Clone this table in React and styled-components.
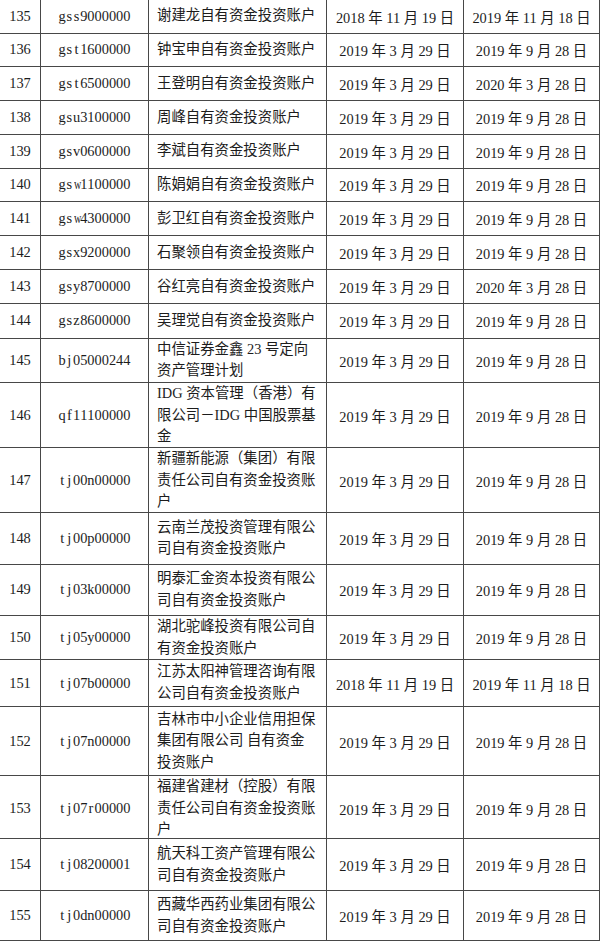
import React from 'react';
import styled, { createGlobalStyle } from 'styled-components';

const GlobalStyle = createGlobalStyle`
  html, body {
    margin: 0;
    padding: 0;
    background: #ffffff;
  }
  body {
    font-family: "Liberation Serif", "Noto Sans CJK SC", serif;
    color: #1c1c1c;
  }
`;

const StyledTable = styled.div`
  width: 600px;
  display: flex;
  flex-direction: column;
  font-size: 14.4px;
`;

const StyledRow = styled.div`
  display: grid;
  grid-template-columns: 41px 108px 178px 137px 136px;
  height: ${({ h }) => h}px;
  box-sizing: border-box;
  border-bottom: 1px solid #474747;
`;

const StyledCell = styled.div`
  display: flex;
  align-items: center;
  justify-content: ${({ left }) => (left ? 'flex-start' : 'center')};
  padding: ${({ left }) => (left ? '0 8px' : '0')};
  box-sizing: border-box;
  border-right: 1px solid #474747;
  white-space: nowrap;
  overflow: visible;
`;

const StyledName = styled.div`
  display: flex;
  flex-direction: column;
  line-height: 21.6px;
`;

const StyledHalf = styled.span`
  display: inline-block;
  width: 0.5em;
  text-align: center;
  ${({ wide }) => wide && 'transform: scaleX(0.7);'}
`;

const Code = ({ text }) => (
  <span>
    {text.split('').map((c, i) => (
      <StyledHalf key={i} wide={c === 'w' || c === 'm'}>
        {c}
      </StyledHalf>
    ))}
  </span>
);

const A = '2019 年 3 月 29 日';
const B = '2019 年 9 月 28 日';
const C = '2020 年 3 月 28 日';
const D = '2018 年 11 月 19 日';
const E = '2019 年 11 月 18 日';

const rows = [
  [135, 'gss9000000', ['谢建龙自有资金投资账户'], D, E, 33.5],
  [136, 'gst1600000', ['钟宝申自有资金投资账户'], A, B, 33.5],
  [137, 'gst6500000', ['王登明自有资金投资账户'], A, C, 34],
  [138, 'gsu3100000', ['周峰自有资金投资账户'], A, B, 34],
  [139, 'gsv0600000', ['李斌自有资金投资账户'], A, B, 33.5],
  [140, 'gsw1100000', ['陈娟娟自有资金投资账户'], A, B, 33.5],
  [141, 'gsw4300000', ['彭卫红自有资金投资账户'], A, B, 34],
  [142, 'gsx9200000', ['石聚领自有资金投资账户'], A, B, 34],
  [143, 'gsy8700000', ['谷红亮自有资金投资账户'], A, C, 34],
  [144, 'gsz8600000', ['吴理觉自有资金投资账户'], A, B, 34.5],
  [145, 'bj05000244', ['中信证券金鑫 23 号定向', '资产管理计划'], A, B, 44.5],
  [146, 'qf11100000', ['IDG 资本管理（香港）有', '限公司－IDG 中国股票基', '金'], A, B, 65],
  [147, 'tj00n00000', ['新疆新能源（集团）有限', '责任公司自有资金投资账', '户'], A, B, 65],
  [148, 'tj00p00000', ['云南兰茂投资管理有限公', '司自有资金投资账户'], A, B, 51.5],
  [149, 'tj03k00000', ['明泰汇金资本投资有限公', '司自有资金投资账户'], A, B, 51.5],
  [150, 'tj05y00000', ['湖北驼峰投资有限公司自', '有资金投资账户'], A, B, 44],
  [151, 'tj07b00000', ['江苏太阳神管理咨询有限', '公司自有资金投资账户'], D, E, 47],
  [152, 'tj07n00000', ['吉林市中小企业信用担保', '集团有限公司 自有资金', '投资账户'], A, B, 69],
  [153, 'tj07r00000', ['福建省建材（控股）有限', '责任公司自有资金投资账', '户'], A, B, 63],
  [154, 'tj08200001', ['航天科工资产管理有限公', '司自有资金投资账户'], A, B, 52],
  [155, 'tj0dn00000', ['西藏华西药业集团有限公', '司自有资金投资账户'], A, B, 50],
];

const App = () => (
  <>
    <GlobalStyle />
    <StyledTable>
      {rows.map(([no, code, name, start, end, h]) => (
        <StyledRow key={no} h={h}>
          <StyledCell>{no}</StyledCell>
          <StyledCell>
            <Code text={code} />
          </StyledCell>
          <StyledCell left>
            <StyledName>
              {name.map(line => (
                <span key={line}>{line}</span>
              ))}
            </StyledName>
          </StyledCell>
          <StyledCell>{start}</StyledCell>
          <StyledCell>{end}</StyledCell>
        </StyledRow>
      ))}
    </StyledTable>
  </>
);

export default App;
